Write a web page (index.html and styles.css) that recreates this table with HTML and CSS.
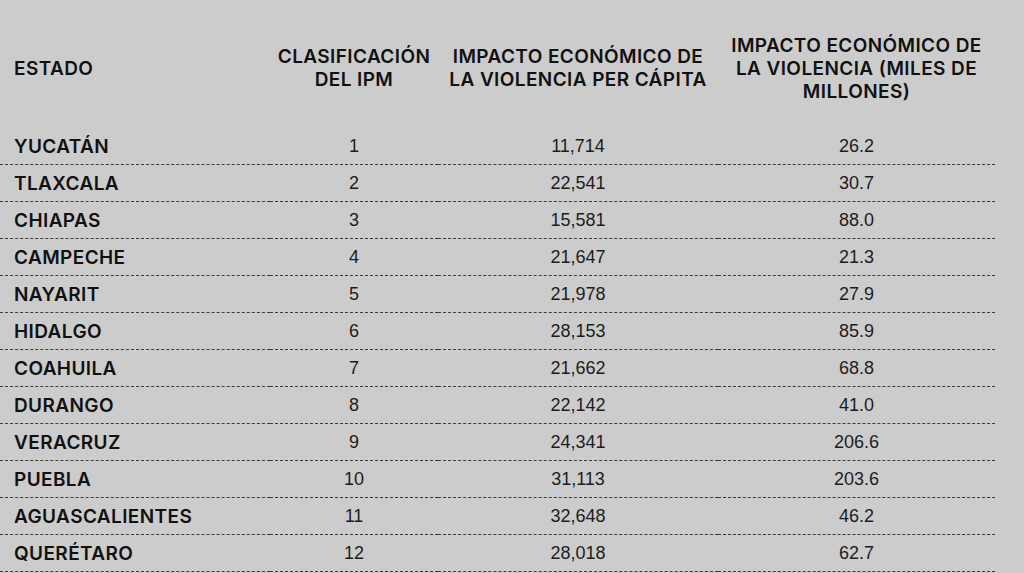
FILE: index.html
```html
<!DOCTYPE html>
<html lang="es">
<head>
<meta charset="utf-8">
<title>Índice de Paz México</title>
<link rel="stylesheet" href="styles.css">
</head>
<body>
<table class="ipm">
  <colgroup>
    <col class="c-estado">
    <col class="c-rank">
    <col class="c-capita">
    <col class="c-total">
  </colgroup>
  <thead>
    <tr>
      <th class="left">ESTADO</th>
      <th>CLASIFICACIÓN<br>DEL IPM</th>
      <th>IMPACTO ECONÓMICO DE<br>LA VIOLENCIA PER CÁPITA</th>
      <th>IMPACTO ECONÓMICO DE<br>LA VIOLENCIA (MILES DE<br>MILLONES)</th>
    </tr>
  </thead>
  <tbody>
    <tr><td class="state">YUCATÁN</td><td>1</td><td>11,714</td><td>26.2</td></tr>
    <tr><td class="state">TLAXCALA</td><td>2</td><td>22,541</td><td>30.7</td></tr>
    <tr><td class="state">CHIAPAS</td><td>3</td><td>15,581</td><td>88.0</td></tr>
    <tr><td class="state">CAMPECHE</td><td>4</td><td>21,647</td><td>21.3</td></tr>
    <tr><td class="state">NAYARIT</td><td>5</td><td>21,978</td><td>27.9</td></tr>
    <tr><td class="state">HIDALGO</td><td>6</td><td>28,153</td><td>85.9</td></tr>
    <tr><td class="state">COAHUILA</td><td>7</td><td>21,662</td><td>68.8</td></tr>
    <tr><td class="state">DURANGO</td><td>8</td><td>22,142</td><td>41.0</td></tr>
    <tr><td class="state">VERACRUZ</td><td>9</td><td>24,341</td><td>206.6</td></tr>
    <tr><td class="state">PUEBLA</td><td>10</td><td>31,113</td><td>203.6</td></tr>
    <tr><td class="state">AGUASCALIENTES</td><td>11</td><td>32,648</td><td>46.2</td></tr>
    <tr><td class="state">QUERÉTARO</td><td>12</td><td>28,018</td><td>62.7</td></tr>
  </tbody>
</table>
</body>
</html>
```

FILE: styles.css
```css
html, body {
  margin: 0;
  padding: 0;
  background: #cccccc;
}

body {
  width: 1024px;
  height: 573px;
  overflow: hidden;
  font-family: Inter, "Liberation Sans", sans-serif;
  color: #111111;
}

.ipm {
  width: 995px;
  border-collapse: collapse;
  table-layout: fixed;
}

.c-estado { width: 270px; }
.c-rank { width: 168px; }
.c-capita { width: 280px; }
.c-total { width: 277px; }

.ipm th {
  height: 108px;
  padding: 14px 0 6px 0;
  font-size: 19px;
  font-weight: 600;
  letter-spacing: 0.4px;
  line-height: 23px;
  text-align: center;
  vertical-align: middle;
  color: #111111;
}

.ipm th.left {
  text-align: left;
  padding-left: 14px;
}

.ipm td {
  height: 36px;
  padding: 0;
  border-bottom: 1px dashed #3c3c3c;
  font-family: "Liberation Sans", Arial, sans-serif;
  font-size: 18px;
  font-weight: 400;
  text-align: center;
  vertical-align: middle;
  color: #1c1c1c;
}

.ipm td.state {
  text-align: left;
  padding-left: 14px;
  font-family: Inter, "Liberation Sans", sans-serif;
  font-size: 19px;
  font-weight: 600;
  letter-spacing: 0.4px;
  color: #111111;
}
```
